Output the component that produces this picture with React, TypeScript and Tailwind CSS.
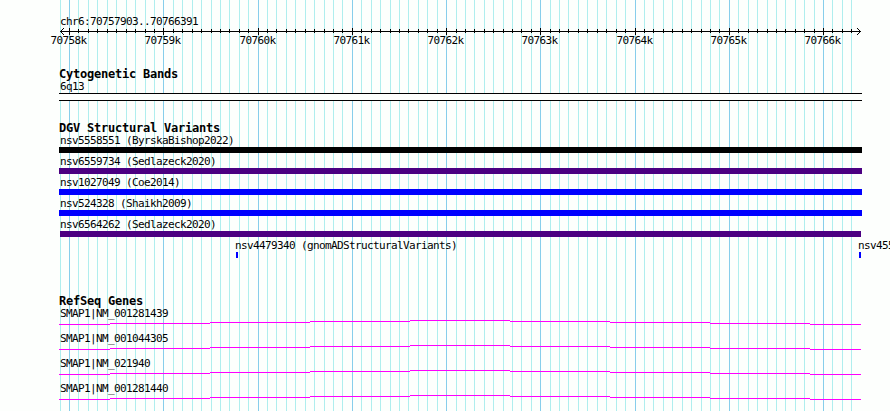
const minorLines = [
  60, 78, 88, 97, 107, 116, 126, 135, 145, 154, 173, 182, 192, 201, 211, 220, 229, 239, 248,
  267, 276, 286, 295, 305, 314, 324, 333, 342, 361, 371, 380, 390, 399, 408, 418, 427, 437,
  456, 465, 474, 484, 493, 503, 512, 521, 531, 550, 559, 568, 578, 587, 597, 606, 616, 625,
  644, 653, 663, 672, 682, 691, 701, 710, 719, 738, 748, 757, 767, 776, 785, 795, 804, 814,
  832, 842, 851,
];
const majorLines = [69, 163, 258, 352, 446, 540, 635, 729, 823];

const labelFont =
  "font-['DejaVu_Sans_Mono','Liberation_Mono',monospace] text-[11px] tracking-[-0.622px] leading-[13px] whitespace-pre";
const titleFont =
  "font-['DejaVu_Sans_Mono','Liberation_Mono',monospace] text-[12px] font-bold tracking-[-0.224px] leading-[13px] whitespace-pre";

function Grid() {
  return (
    <svg className="absolute inset-0" width="890" height="411" shapeRendering="crispEdges">
      {minorLines.map((x) => (
        <rect key={x} x={x} y={0} width={1} height={411} fill="#afeeee" />
      ))}
      {majorLines.map((x) => (
        <rect key={x} x={x} y={0} width={1} height={411} fill="#87ceeb" />
      ))}
    </svg>
  );
}

function Ruler() {
  return (
    <svg className="block" width="890" height="8" shapeRendering="crispEdges">
      <rect x={60} y={3} width={801} height={1} />
      {minorLines.slice(1).map((x) => (
        <rect key={x} x={x} y={1} width={1} height={4} />
      ))}
      {majorLines.map((x) => (
        <rect key={x} x={x} y={0} width={1} height={7} />
      ))}
      {[1, 2, 3].map((d) => (
        <g key={d}>
          <rect x={60 + d} y={3 - d} width={1} height={1} />
          <rect x={60 + d} y={3 + d} width={1} height={1} />
          <rect x={860 - d} y={3 - d} width={1} height={1} />
          <rect x={860 - d} y={3 + d} width={1} height={1} />
        </g>
      ))}
    </svg>
  );
}

const variants = [
  { name: "nsv5558551 (ByrskaBishop2022)", bar: "ml-[59px] w-[803px] bg-black" },
  { name: "nsv6559734 (Sedlazeck2020)", bar: "ml-[59px] w-[803px] bg-[#4b0082]" },
  { name: "nsv1027049 (Coe2014)", bar: "ml-[59px] w-[803px] bg-[#0000ff]" },
  { name: "nsv524328 (Shaikh2009)", bar: "ml-[59px] w-[803px] bg-[#0000ff]" },
  { name: "nsv6564262 (Sedlazeck2020)", bar: "ml-[60px] w-[801px] bg-[#4b0082]" },
];
const genes = ["SMAP1|NM_001281439", "SMAP1|NM_001044305", "SMAP1|NM_021940", "SMAP1|NM_001281440"];
const segments = [
  [59, 51, 4],
  [110, 100, 3],
  [210, 100, 2],
  [310, 100, 1],
  [410, 100, 0],
  [510, 100, 1],
  [610, 100, 2],
  [710, 100, 3],
  [810, 51, 4],
];

export default function App() {
  return (
    <div className="relative h-[411px] w-[890px] overflow-hidden bg-[#fdfffd] text-black">
      <Grid />
      <div className="relative flex flex-col pt-[15px]">
        <div className={`h-[13px] pl-[60px] ${labelFont}`}>chr6:70757903..70766391</div>
        <Ruler />
        <div className="-mt-[2px] flex h-[34px] pl-[50.5px]">
          {majorLines.map((x, i) => (
            <div
              key={x}
              className={`shrink-0 ${labelFont}`}
              style={{ width: (majorLines[i + 1] ?? 862) - x }}
            >
              {`${70758 + i}k`}
            </div>
          ))}
        </div>
        <div className={`h-[12px] pl-[59px] ${titleFont}`}>Cytogenetic Bands</div>
        <div className={`h-[13px] pl-[60px] ${labelFont}`}>6q13</div>
        <div className="ml-[59px] h-[8px] w-[803px] border-y border-black bg-[#fdfffd]" />
        <div className={`mt-[21px] h-[12px] pl-[59px] ${titleFont}`}>DGV Structural Variants</div>
        {variants.map((v) => (
          <div key={v.name} className="h-[21px]">
            <div className={`h-[13px] pl-[60px] ${labelFont}`}>{v.name}</div>
            <div className={`h-[6px] ${v.bar}`} />
          </div>
        ))}
        <div className="flex h-[56px] pl-[235px]">
          <div className="w-[623px] shrink-0">
            <div className={`h-[13px] ${labelFont}`}>nsv4479340 (gnomADStructuralVariants)</div>
            <div className="ml-px h-[6px] w-[2px] bg-[#0000ff]" />
          </div>
          <div className="w-[32px]">
            <div className={`h-[13px] ${labelFont}`}>nsv455</div>
            <div className="ml-px h-[6px] w-[2px] bg-[#0000ff]" />
          </div>
        </div>
        <div className={`h-[12px] pl-[59px] ${titleFont}`}>RefSeq Genes</div>
        {genes.map((g) => (
          <div key={g} className="h-[25px]">
            <div className={`h-[13px] pl-[60px] ${labelFont}`}>{g}</div>
            <svg className="block" width="890" height="5" shapeRendering="crispEdges">
              {segments.map(([x, w, y]) => (
                <rect key={x} x={x} y={y} width={w} height={1} fill="#ff00ff" />
              ))}
            </svg>
          </div>
        ))}
      </div>
    </div>
  );
}
